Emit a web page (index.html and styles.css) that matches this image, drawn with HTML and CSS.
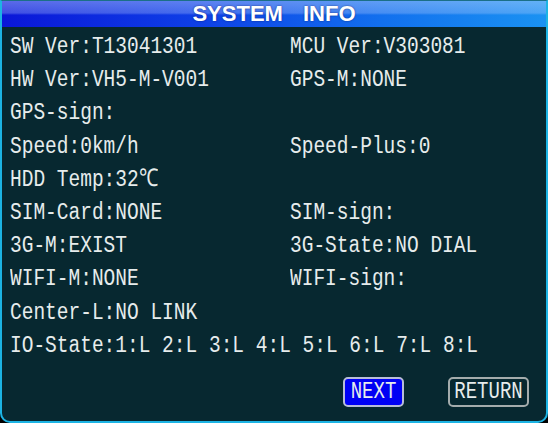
FILE: index.html
```html
<!DOCTYPE html>
<html lang="en">
<head>
    <meta charset="UTF-8">
    <meta name="viewport" content="width=device-width, initial-scale=1.0">
    <title>System Info</title>
    <link rel="stylesheet" href="styles.css">
</head>
<body>
    <div class="frame">
        <div class="title-bar">SYSTEM INFO</div>

        <!-- two column info list -->
        <div class="info">
            <div class="item"><span>SW Ver:T13041301</span></div>
            <div class="item"><span>MCU Ver:V303081</span></div>
            <div class="item"><span>HW Ver:VH5-M-V001</span></div>
            <div class="item"><span>GPS-M:NONE</span></div>
            <div class="item"><span>GPS-sign:</span></div>
            <div class="item"></div>
            <div class="item"><span>Speed:0km/h</span></div>
            <div class="item"><span>Speed-Plus:0</span></div>
            <div class="item"><span>HDD Temp:32℃</span></div>
            <div class="item"></div>
            <div class="item"><span>SIM-Card:NONE</span></div>
            <div class="item"><span>SIM-sign:</span></div>
            <div class="item"><span>3G-M:EXIST</span></div>
            <div class="item"><span>3G-State:NO DIAL</span></div>
            <div class="item"><span>WIFI-M:NONE</span></div>
            <div class="item"><span>WIFI-sign:</span></div>
            <div class="item"><span>Center-L:NO LINK</span></div>
            <div class="item"></div>
            <div class="item wide"><span>IO-State:1:L 2:L 3:L 4:L 5:L 6:L 7:L 8:L</span></div>
        </div>

        <div class="buttons">
            <button class="btn btn-next"><span>NEXT</span></button>
            <button class="btn btn-return"><span>RETURN</span></button>
        </div>
    </div>
</body>
</html>
```

FILE: styles.css
```css
body {
    margin: 0;
    background-color: #000;
    font-family: "Liberation Mono", monospace;
}

.frame {
    width: 548px;
    height: 423px;
    box-sizing: border-box;
    background-color: #072830;
    border: 2px solid #1cb4e4;
    border-top: 1px solid #1b6f88;
    border-radius: 0 0 10px 10px;
    overflow: hidden;
}

/* blue header strip */
.title-bar {
    height: 26px;
    line-height: 26px;
    text-align: center;
    color: #fff;
    font-family: "Liberation Sans", Arial, sans-serif;
    font-weight: bold;
    font-size: 22px;
    word-spacing: 14px;
    text-shadow: 0 0 2px rgba(0, 0, 60, 0.6);
    background:
        linear-gradient(to bottom, rgba(200, 220, 255, 0.42) 0, rgba(190, 210, 255, 0.3) 46%, rgba(255, 255, 255, 0) 54%),
        linear-gradient(to right, #0a16d8 0%, #0e3ee6 35%, #1270ee 70%, #1a92f2 100%);
}

.info {
    display: grid;
    grid-template-columns: 280px 1fr;
    padding: 4px 0 0 8px;
    color: #e6ecec;
    font-size: 19.5px;
}

.item {
    height: 33.2px;
    line-height: 33.2px;
    white-space: pre;
}

.item span, .btn span {
    display: inline-block;
    transform: scaleY(1.25);
}

.wide {
    grid-column: 1 / 3;
}

.buttons {
    display: flex;
    justify-content: flex-end;
    gap: 44px;
    margin-top: 14px;
    padding-right: 17px;
}

.btn {
    height: 30px;
    padding: 0;
    font-family: "Liberation Mono", monospace;
    font-size: 19px;
    color: #e6ecec;
    border: 2px solid #a4acac;
    border-radius: 5px;
    background: transparent;
}

.btn-next {
    width: 61px;
    background-color: #0000f4;
    border-color: #b8bcd8;
}

.btn-return {
    width: 81px;
}
```
